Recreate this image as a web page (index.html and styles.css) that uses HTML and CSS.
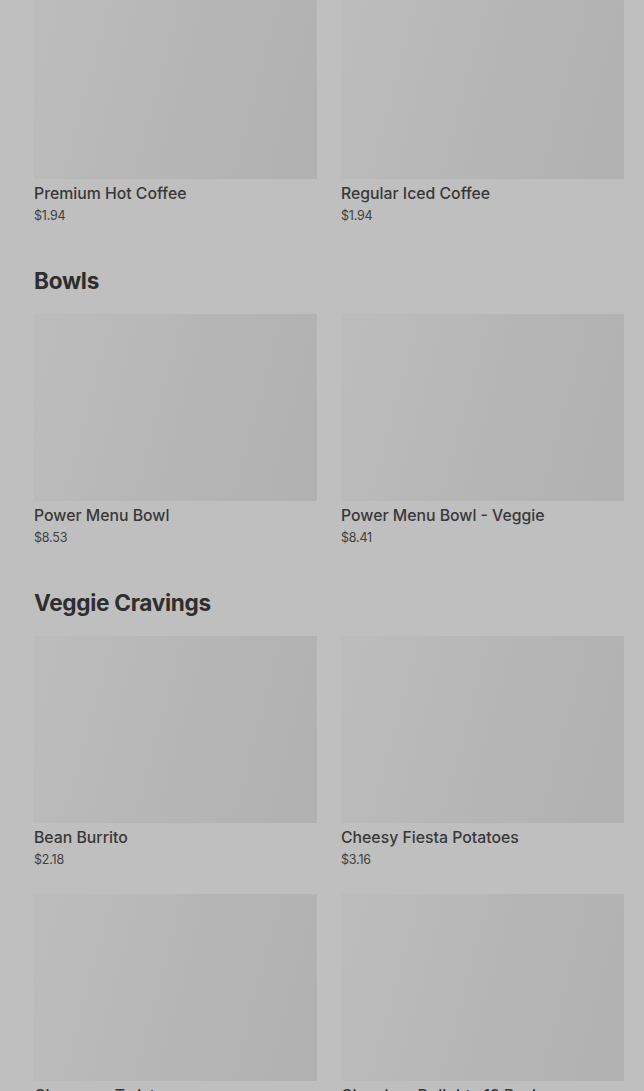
FILE: index.html
```html
<!DOCTYPE html>
<html>
<head>
<meta charset="utf-8">
<link rel="stylesheet" href="styles.css">
</head>
<body>
<main class="menu">
  <section class="section first">
    <div class="grid">
      <div class="card"><div class="thumb"></div><div class="name">Premium Hot Coffee</div><div class="price">$1.94</div></div>
      <div class="card"><div class="thumb"></div><div class="name">Regular Iced Coffee</div><div class="price">$1.94</div></div>
    </div>
  </section>
  <section class="section">
    <h2 class="heading">Bowls</h2>
    <div class="grid">
      <div class="card"><div class="thumb"></div><div class="name">Power Menu Bowl</div><div class="price">$8.53</div></div>
      <div class="card"><div class="thumb"></div><div class="name">Power Menu Bowl - Veggie</div><div class="price">$8.41</div></div>
    </div>
  </section>
  <section class="section">
    <h2 class="heading">Veggie Cravings</h2>
    <div class="grid">
      <div class="card"><div class="thumb"></div><div class="name">Bean Burrito</div><div class="price">$2.18</div></div>
      <div class="card"><div class="thumb"></div><div class="name">Cheesy Fiesta Potatoes</div><div class="price">$3.16</div></div>
      <div class="card"><div class="thumb"></div><div class="name">Cinnamon Twists</div><div class="price">$1.29</div></div>
      <div class="card"><div class="thumb"></div><div class="name">Cinnabon Delights 12 Pack</div><div class="price">$6.49</div></div>
    </div>
  </section>
</main>
</body>
</html>
```
FILE: styles.css
```css
html, body {
  margin: 0;
  padding: 0;
  background: #bfbfbf;
  overflow: hidden;
}
body {
  font-family: "Inter", "Roboto", "Liberation Sans", sans-serif;
  color: #333;
}
.menu {
  padding: 0 20px 40px 34px;
  margin-top: -8px;
}
.section {
  margin-bottom: 40px;
}
.heading {
  margin: 0 0 17px 0;
  font-size: 22.6px;
  line-height: 32px;
  font-weight: 700;
  color: #2e2e2e;
  letter-spacing: -0.3px;
}
.grid {
  display: grid;
  grid-template-columns: 1fr 1fr;
  column-gap: 24px;
  row-gap: 25px;
}
.thumb {
  height: 187px;
  background: linear-gradient(105deg, #bcbcbc 0%, #b8b8b8 35%, #b4b4b4 65%, #b1b1b1 100%);
}
.name {
  margin-top: 4px;
  font-size: 15.8px;
  line-height: 21px;
  font-weight: 500;
  color: #383838;
  white-space: nowrap;
}
.price {
  margin-top: 3px;
  font-size: 12.5px;
  line-height: 18px;
  color: #404040;
  letter-spacing: -0.2px;
}
```
